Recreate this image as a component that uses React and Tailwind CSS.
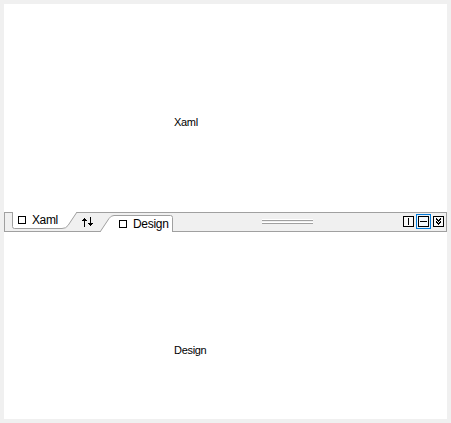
const uiFont = "font-['Liberation_Sans',Arial,sans-serif]";

function Square() {
  return <span className="size-2 shrink-0 border border-black bg-white" />;
}

function Pane({ label, className }) {
  return (
    <section className={`bg-white pl-[170px] text-[11px] leading-[14px] text-black ${className}`}>
      <span className="block tracking-[-0.3px]">{label}</span>
    </section>
  );
}

function XamlTab() {
  return (
    <button className="relative flex h-[18px] w-[66px] items-start pl-1.5">
      <svg className="absolute top-0 left-0" width="66" height="18" viewBox="0 0 66 18">
        <path d="M.5 0V14.5Q.5 16.5 2.5 16.5H50Q54 16.5 56 13.5L65 0Z" fill="#fff" />
        <path d="M.5 0V14.5Q.5 16.5 2.5 16.5H50Q54 16.5 56 13.5L65 0" fill="none" stroke="#a0a0a0" />
      </svg>
      <span className="relative flex items-start gap-[6px]">
        <span className="flex pt-1"><Square /></span>
        <span className="text-[12px] leading-4 tracking-[-0.4px]">Xaml</span>
      </span>
    </button>
  );
}

function DesignTab() {
  return (
    <button className="relative ml-[6px] mt-[3px] flex h-[17px] w-[73px] items-start pl-[19px]">
      <svg className="absolute top-0 left-0" width="73" height="17" viewBox="0 0 73 17">
        <path d="M0 17L9 3.5Q11 .5 14 .5H70.5Q72.5 .5 72.5 2.5V17Z" fill="#fff" />
        <path d="M0 17L9 3.5Q11 .5 14 .5H70.5Q72.5 .5 72.5 2.5V17" fill="none" stroke="#a0a0a0" />
      </svg>
      <span className="relative flex items-start gap-[6px]">
        <span className="flex pt-[5px]"><Square /></span>
        <span className="pt-px text-[12px] leading-4 tracking-[-0.3px]">Design</span>
      </span>
    </button>
  );
}

function SwapIcon() {
  return (
    <svg className="ml-[3px] mt-[5px]" width="13" height="11" viewBox="0 0 13 11" shapeRendering="crispEdges">
      <path d="M3 1h1v9h-1zM2 2h3v1h-3zM1 3h5v1h-5zM9 0h1v9h-1zM7 6h5v1h-5zM8 7h3v1h-3z" fill="#000" />
    </svg>
  );
}

function Grip() {
  return (
    <div className="ml-[89px] mt-[7px] flex w-[51px] flex-col gap-px">
      <span className="h-0.5 border-t border-b border-t-white border-b-[#a0a0a0]" />
      <span className="h-0.5 border-t border-b border-t-white border-b-[#a0a0a0]" />
    </div>
  );
}

function BarIcon({ d }) {
  return (
    <svg width="11" height="11" viewBox="0 0 11 11" shapeRendering="crispEdges">
      <rect x=".5" y=".5" width="10" height="10" fill="#fff" fillOpacity=".5" stroke="#000" />
      <path d={d} fill="#000" />
    </svg>
  );
}

export default function App() {
  return (
    <main className={`h-[423px] w-[451px] bg-[#f0f0f0] p-1 text-black ${uiFont}`}>
      <Pane label="Xaml" className="h-[208px] pt-[111px]" />
      <div className="relative flex h-5 items-start bg-[#f0f0f0] pl-2 shadow-[inset_0_0_0_1px_#a0a0a0]">
        <XamlTab />
        <SwapIcon />
        <DesignTab />
        <Grip />
        <div className="ml-auto mt-0.5 mr-[3px] flex items-center gap-0.5">
          <button><BarIcon d="M5 2h1v7h-1z" /></button>
          <button className="border border-[#0078d7] bg-[#e5f1fb] p-px"><BarIcon d="M2 5h7v1h-7z" /></button>
          <button><BarIcon d="M3 2h1v1h-1zM7 2h1v1h-1zM3 3h2v1h-2zM6 3h2v1h-2zM4 4h3v1h-3zM5 5h1v1h-1zM3 5h1v1h-1zM7 5h1v1h-1zM3 6h2v1h-2zM6 6h2v1h-2zM4 7h3v1h-3zM5 8h1v1h-1z" /></button>
        </div>
      </div>
      <Pane label="Design" className="h-[187px] pt-[111px]" />
    </main>
  );
}
